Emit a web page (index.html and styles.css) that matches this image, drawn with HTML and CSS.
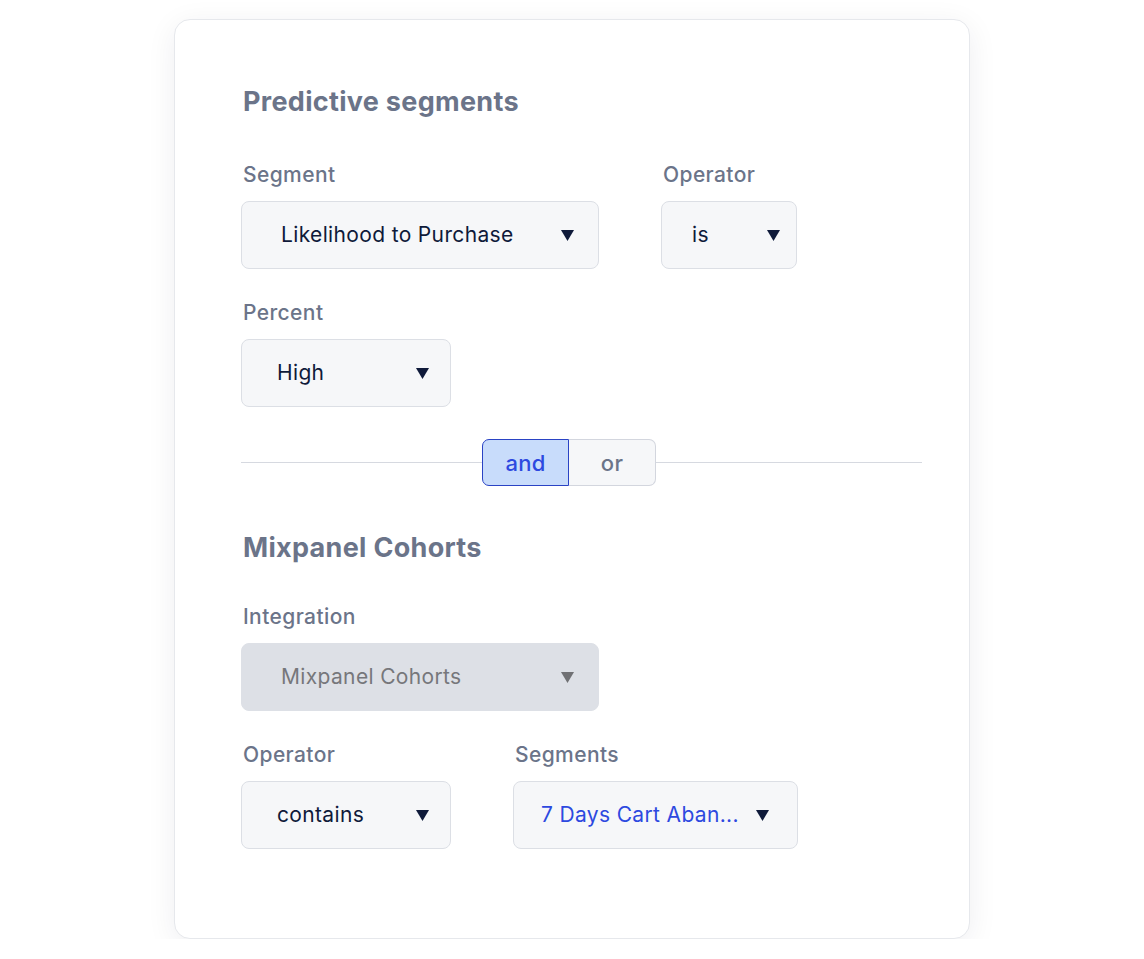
FILE: index.html
```html
<!DOCTYPE html>
<html lang="en">
<head>
    <meta charset="UTF-8">
    <meta name="viewport" content="width=device-width, initial-scale=1.0">
    <title>Segments</title>
    <link rel="stylesheet" href="styles.css">
</head>
<body>
    <div class="page">
        <div class="card">
            <!-- Predictive segments -->
            <h2 class="title">Predictive segments</h2>

            <div class="row">
                <div class="field">
                    <label>Segment</label>
                    <div class="select select-seg">
                        <span>Likelihood to Purchase</span>
                        <svg class="arrow" width="13" height="11" viewBox="0 0 13 11"><polygon points="0,0 13,0 6.5,11"/></svg>
                    </div>
                </div>
                <div class="field">
                    <label>Operator</label>
                    <div class="select select-is">
                        <span>is</span>
                        <svg class="arrow" width="13" height="11" viewBox="0 0 13 11"><polygon points="0,0 13,0 6.5,11"/></svg>
                    </div>
                </div>
            </div>

            <div class="row">
                <div class="field">
                    <label>Percent</label>
                    <div class="select select-high">
                        <span>High</span>
                        <svg class="arrow" width="13" height="11" viewBox="0 0 13 11"><polygon points="0,0 13,0 6.5,11"/></svg>
                    </div>
                </div>
            </div>

            <!-- and / or -->
            <div class="joiner">
                <div class="line line-left"></div>
                <div class="toggle">
                    <button class="toggle-btn active">and</button>
                    <button class="toggle-btn">or</button>
                </div>
                <div class="line line-right"></div>
            </div>

            <!-- Mixpanel -->
            <h2 class="title title-second">Mixpanel Cohorts</h2>

            <div class="row">
                <div class="field">
                    <label>Integration</label>
                    <div class="select select-seg disabled">
                        <span>Mixpanel Cohorts</span>
                        <svg class="arrow" width="13" height="11" viewBox="0 0 13 11"><polygon points="0,0 13,0 6.5,11"/></svg>
                    </div>
                </div>
            </div>

            <div class="row">
                <div class="field">
                    <label>Operator</label>
                    <div class="select select-high">
                        <span>contains</span>
                        <svg class="arrow" width="13" height="11" viewBox="0 0 13 11"><polygon points="0,0 13,0 6.5,11"/></svg>
                    </div>
                </div>
                <div class="field">
                    <label>Segments</label>
                    <div class="select select-cart">
                        <span class="value-link">7 Days Cart Aban...</span>
                        <svg class="arrow" width="13" height="11" viewBox="0 0 13 11"><polygon points="0,0 13,0 6.5,11"/></svg>
                    </div>
                </div>
            </div>
        </div>
    </div>
</body>
</html>
```

FILE: styles.css
```css
body {
    margin: 0;
    background: #ffffff;
    font-family: "Inter", "Noto Sans", sans-serif;
}

.page {
    padding: 19px 0 0 174px;
}

/* carte principal */
.card {
    width: 796px;
    height: 920px;
    box-sizing: border-box;
    background: #ffffff;
    border: 1px solid #e6e8ec;
    border-radius: 16px;
    box-shadow: 0 6px 30px rgba(20, 30, 60, 0.07);
    padding: 66px 0 0 66px;
}

.title {
    margin: 0;
    padding-left: 2px;
    font-size: 27px;
    line-height: 32px;
    font-weight: 700;
    color: #6b7489;
    letter-spacing: 0.3px;
}

.title-second {
    margin-top: 46px;
}

.row {
    display: flex;
    gap: 62px;
    margin-top: 30px;
}

.title + .row {
    margin-top: 43px;
}

.title-second + .row {
    margin-top: 39px;
}

.field {
    display: flex;
    flex-direction: column;
}

.field label {
    padding-left: 2px;
    font-size: 21px;
    line-height: 28px;
    font-weight: 500;
    color: #6b7489;
    letter-spacing: 0.4px;
    margin-bottom: 12px;
}

.select {
    height: 68px;
    box-sizing: border-box;
    display: flex;
    align-items: center;
    justify-content: space-between;
    background: #f6f7f9;
    border: 1.5px solid #dcdfe5;
    border-radius: 8px;
    font-size: 21px;
    letter-spacing: 0.35px;
    color: #0f1a3a;
}

.select span {
    margin-top: -2px;
}

.select .arrow {
    fill: #0f1a3a;
}

.select-seg {
    width: 358px;
    padding: 0 24px 0 39px;
}

.select-is {
    width: 136px;
    padding: 0 16px 0 30px;
}

.select-high {
    width: 210px;
    padding: 0 21px 0 35px;
}

.select-cart {
    width: 285px;
    padding: 0 28px 0 27px;
}

.value-link {
    color: #2d49e0;
}

.disabled {
    background: #dde0e6;
    border-color: #dde0e6;
    color: #76777b;
}

.disabled .arrow {
    fill: #707174;
}

/* and / or */
.joiner {
    display: flex;
    align-items: center;
    margin-top: 32px;
    width: 681px;
}

.line {
    height: 1.5px;
    background: #d6d9e0;
}

.line-left {
    width: 241px;
}

.line-right {
    flex: 1;
}

.toggle {
    display: flex;
}

.toggle-btn {
    width: 87px;
    height: 47px;
    box-sizing: border-box;
    font-family: inherit;
    font-size: 22px;
    font-weight: 500;
    letter-spacing: 0.3px;
    background: #f6f7f9;
    color: #6b7489;
    border: 1.5px solid #d3d6de;
    border-radius: 0 7px 7px 0;
    padding: 0;
}

.toggle-btn.active {
    background: #c8dcfb;
    color: #2d49e0;
    border-color: #2a43c4;
    border-radius: 7px 0 0 7px;
}

.toggle-btn + .toggle-btn {
    border-left: none;
}
```
